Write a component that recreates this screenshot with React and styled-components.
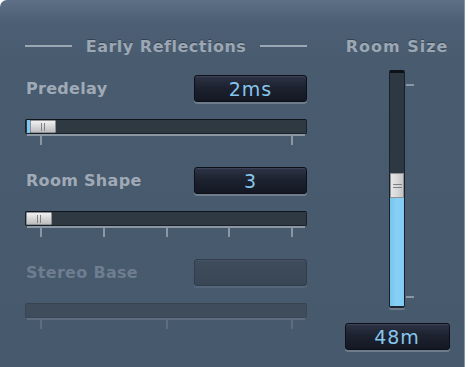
import React from 'react'
import styled, { createGlobalStyle } from 'styled-components'

const Global = createGlobalStyle`
  html, body { margin: 0; padding: 0; background: #ffffff; }
  body { font-family: "DejaVu Sans", "Liberation Sans", sans-serif; }
`

const Panel = styled.div`
  width: 465px;
  height: 367px;
  box-sizing: border-box;
  border-top-left-radius: 7px;
  border-right: 1px solid #8794a3;
  background: linear-gradient(#5e7085 0, #4d5f74 22px, #485b6f 60px, #46596d 100%);
  padding: 36px 0 0 25px;
  display: flex;
  gap: 38px;
`

const Column = styled.div`
  width: ${p => p.$w}px;
  display: flex;
  flex-direction: column;
  align-items: ${p => (p.$center ? 'center' : 'stretch')};
`

const Heading = styled.div`
  height: 20px;
  display: flex;
  align-items: center;
  justify-content: ${p => (p.$center ? 'center' : 'space-between')};
  font-size: 16px;
  font-weight: bold;
  letter-spacing: ${p => (p.$center ? 1 : 0.5)}px;
  color: #9ca7b4;
  text-shadow: 0 -1px 0 rgba(30, 40, 52, 0.5);
  white-space: nowrap;
  margin-bottom: ${p => p.$mb}px;
`

const Rule = styled.span`
  width: 47px;
  height: 2px;
  background: #9ca7b4;
`

const Param = styled.div`
  display: flex;
  flex-direction: column;
  margin-bottom: 20px;
`

const Row = styled.div`
  height: 27px;
  display: flex;
  align-items: center;
  justify-content: space-between;
  margin-bottom: 17px;
`

const Label = styled.span`
  font-size: 16px;
  font-weight: bold;
  letter-spacing: 0.3px;
  color: ${p => (p.$off ? '#6e7e90' : '#a0aab6')};
  padding-left: 1px;
`

const ValueBox = styled.div`
  width: ${p => p.$w}px;
  height: 27px;
  box-sizing: border-box;
  border-radius: 3px;
  display: flex;
  align-items: center;
  justify-content: center;
  font-size: 19px;
  letter-spacing: 1px;
  color: #86c6ec;
  border: 1px solid ${p => (p.$off ? '#303c4a' : '#0c0f16')};
  background: ${p =>
    p.$off
      ? 'linear-gradient(#3f4c5c, #394655)'
      : 'linear-gradient(#2e3446 0, #1d2230 45%, #141824 100%)'};
  box-shadow: 0 2px 0 ${p => (p.$off ? '#56667a' : '#6e7c8c')},
    inset 0 1px 0 ${p => (p.$off ? '#465465' : '#3c4356')};
`

const Slider = styled.div`
  display: flex;
  flex-direction: column;
`

const Track = styled.div`
  height: 15px;
  box-sizing: border-box;
  border-radius: 2px;
  border: 1px solid ${p => (p.$off ? '#3a4656' : '#1a2028')};
  border-top-color: ${p => (p.$off ? '#364250' : '#10151b')};
  background: ${p => (p.$off ? '#3f4c5b' : '#2f3942')};
  display: flex;
  align-items: stretch;
  padding-left: ${p => p.$pad}px;
`

const Fill = styled.span`
  width: 3px;
  background: #7cc6ef;
`

const Thumb = styled.span`
  width: 26px;
  box-sizing: border-box;
  border: 1px solid #8d9196;
  border-radius: 1px;
  background: linear-gradient(#f0f0f0, #d2d2d2 60%, #bdbdbd);
  display: flex;
  justify-content: center;
  align-items: center;
  gap: 2px;
  &::before, &::after {
    content: '';
    width: 1px;
    height: 8px;
    background: #7c7f84;
  }
`

const Ticks = styled.div`
  height: 13px;
  box-sizing: border-box;
  margin: 0 2px;
  border-top: 2px solid ${p => (p.$off ? '#5d6c7e' : '#8c97a4')};
  display: flex;
  justify-content: space-between;
  padding: 0 12px 0 13px;
`

const Tick = styled.span`
  width: 2px;
  height: 9px;
  background: ${p => (p.$off ? '#5d6c7e' : '#8c97a4')};
`

const VWrap = styled.div`
  position: relative;
  width: 16px;
  height: 240px;
  margin-bottom: 13px;
`

const VTrack = styled.div`
  width: 16px;
  height: 238px;
  box-sizing: border-box;
  border-radius: 2px;
  border: 1px solid #1a2028;
  border-top: 3px solid #0e1217;
  border-bottom: 2px solid #1e252d;
  background: #2e3842;
  display: flex;
  flex-direction: column;
  justify-content: flex-end;
  box-shadow: 0 2px 0 #6d7a89;
`

const VThumb = styled.span`
  height: 25px;
  box-sizing: border-box;
  border: 1px solid #8d9196;
  background: linear-gradient(90deg, #e6e6e6, #d8d8d8 50%, #c4c4c4);
  display: flex;
  flex-direction: column;
  justify-content: center;
  align-items: center;
  gap: 2px;
  &::before, &::after {
    content: '';
    width: 9px;
    height: 1px;
    background: #7c7f84;
  }
`

const VFill = styled.span`
  height: ${p => p.$h}px;
  background: linear-gradient(90deg, #78c4ec, #88d0f6 50%, #80caf2);
`

const VTick = styled.span`
  position: absolute;
  left: 17px;
  top: ${p => p.$y}px;
  width: 8px;
  height: 2px;
  background: #8c97a4;
`

function HSlider({ ticks, pos, fill, off }) {
  return (
    <Slider>
      <Track $off={off} $pad={fill ? 1 : pos}>
        {fill && <Fill />}
        {!off && <Thumb />}
      </Track>
      <Ticks $off={off}>
        {Array.from({ length: ticks }).map((_, i) => (
          <Tick key={i} $off={off} />
        ))}
      </Ticks>
    </Slider>
  )
}

export default function App() {
  return (
    <>
      <Global />
      <Panel>
        <Column $w={282}>
          <Heading $mb={19}>
            <Rule />
            <span>Early Reflections</span>
            <Rule />
          </Heading>
          <Param>
            <Row>
              <Label>Predelay</Label>
              <ValueBox $w={113}>2ms</ValueBox>
            </Row>
            <HSlider ticks={2} fill />
          </Param>
          <Param>
            <Row>
              <Label>Room Shape</Label>
              <ValueBox $w={113}>3</ValueBox>
            </Row>
            <HSlider ticks={5} pos={0} />
          </Param>
          <Param>
            <Row>
              <Label $off>Stereo Base</Label>
              <ValueBox $w={113} $off />
            </Row>
            <HSlider ticks={3} off />
          </Param>
        </Column>
        <Column $w={104} $center>
          <Heading $center $mb={14}>Room Size</Heading>
          <VWrap>
            <VTrack>
              <VThumb />
              <VFill $h={108} />
            </VTrack>
            <VTick $y={14} />
            <VTick $y={226} />
          </VWrap>
          <ValueBox $w={105}>48m</ValueBox>
        </Column>
      </Panel>
    </>
  )
}
